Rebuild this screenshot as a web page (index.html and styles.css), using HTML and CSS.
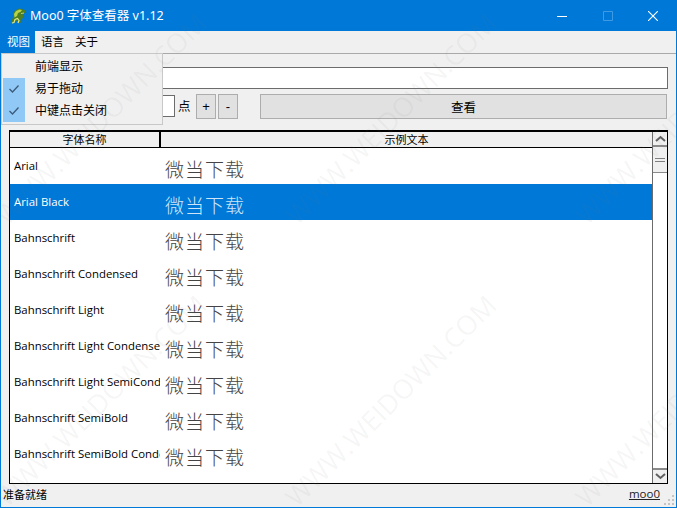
FILE: index.html
```html
<!DOCTYPE html>
<html lang="zh">
<head>
<meta charset="utf-8">
<title>Moo0 字体查看器</title>
<link rel="stylesheet" href="styles.css">
</head>
<body>
<div class="window">
  <header class="titlebar">
    <svg class="logo" width="18" height="18" viewBox="0 0 18 18">
      <path d="M2 16.500l1.500-5 1-2.500-.5-2 2-3.500 4-2 3 .5 3.500 1.500-.5 2.500-3 .5 1.500 2-1 3-2 1.500.5 2.500-3.500.5-.5-2-2.500.5-.5 1.500z" fill="#4f7f22"/>
      <path d="M5 7l2-3 3.500-1.500 2.500.5-1.500 2-2.500 1L8 9 5.500 10.500z" fill="#b5d24a"/>
      <path d="M3 16l2-.5 1-3 2.500-1 1.500 2-1 2.500" fill="none" stroke="#e2ea8a" stroke-width="1.200"/>
      <path d="M12 6.500l3-.5" stroke="#c3d75a" stroke-width="1"/>
    </svg>
    <span class="title">Moo0 字体查看器 v1.12</span>
    <div class="winbtns">
      <svg viewBox="0 0 10 10"><path d="M0 5.500h10" stroke="#fff"/></svg>
      <svg viewBox="0 0 10 10"><path d="M.5.5h9v9h-9z" stroke="#3d9be6" fill="none"/></svg>
      <svg viewBox="0 0 10 10"><path d="M0 0l10 10M10 0L0 10" stroke="#fff" stroke-width="1.100"/></svg>
    </div>
  </header>
  <nav class="menubar">
    <span class="menu active">视图</span>
    <span class="menu">语言</span>
    <span class="menu">关于</span>
  </nav>
  <main class="content">
    <div class="textrow"><div class="textinput"></div></div>
    <div class="controls">
      <div class="sizeinput"></div>
      <span class="unit">点</span>
      <button class="small plus">+</button>
      <button class="small">-</button>
      <button class="view">查看</button>
    </div>
    <div class="table">
      <div class="listpane">
        <div class="thead"><div class="th name">字体名称</div><div class="th sample">示例文本</div></div>
        <div class="row"><div class="fname">Arial</div><div class="demo">微当下载</div></div>
        <div class="row selected"><div class="fname">Arial Black</div><div class="demo">微当下载</div></div>
        <div class="row"><div class="fname">Bahnschrift</div><div class="demo">微当下载</div></div>
        <div class="row"><div class="fname">Bahnschrift Condensed</div><div class="demo">微当下载</div></div>
        <div class="row"><div class="fname">Bahnschrift Light</div><div class="demo">微当下载</div></div>
        <div class="row"><div class="fname">Bahnschrift Light Condensed</div><div class="demo">微当下载</div></div>
        <div class="row"><div class="fname">Bahnschrift Light SemiCondensed</div><div class="demo">微当下载</div></div>
        <div class="row"><div class="fname">Bahnschrift SemiBold</div><div class="demo">微当下载</div></div>
        <div class="row"><div class="fname">Bahnschrift SemiBold Condensed</div><div class="demo">微当下载</div></div>
      </div>
      <div class="scrollbar">
        <div class="sb-btn"><svg viewBox="0 0 11 7"><path d="M1 6l4.500-4 4.500 4" stroke="#606060" stroke-width="2" fill="none"/></svg></div>
        <div class="sb-thumb"><i></i><i></i></div>
        <div class="sb-track"></div>
        <div class="sb-btn down"><svg viewBox="0 0 11 7"><path d="M1 1l4.500 4 4.500-4" stroke="#606060" stroke-width="2" fill="none"/></svg></div>
      </div>
    </div>
  </main>
  <footer class="statusbar">
    <span class="status">准备就绪</span>
    <a class="link">moo0</a>
    <svg class="grip" viewBox="0 0 11 11"><path d="M8 0h2v2H8zM4 4h2v2H4zM8 4h2v2H8zM0 8h2v2H0zM4 8h2v2H4zM8 8h2v2H8z" fill="#c4c4c4"/></svg>
  </footer>
  <div class="dropdown">
    <div class="item"><span class="check"></span><span class="label">前端显示</span></div>
    <div class="item"><span class="check on"><svg viewBox="0 0 12 10"><path d="M1.500 5l3 3 6-6.500" stroke="#3c5a78" stroke-width="1.300" fill="none"/></svg></span><span class="label">易于拖动</span></div>
    <div class="item"><span class="check on"><svg viewBox="0 0 12 10"><path d="M1.500 5l3 3 6-6.500" stroke="#3c5a78" stroke-width="1.300" fill="none"/></svg></span><span class="label">中键点击关闭</span></div>
  </div>
  <div class="wm wm1">WWW.WEIDOWN.COM</div>
  <div class="wm wm2">WWW.WEIDOWN.COM</div>
  <div class="wm wm3">WWW.WEIDOWN.COM</div>
  <div class="wm wm4">WWW.WEIDOWN.COM</div>
  <div class="wm wm5">WWW.WEIDOWN.COM</div>
  <div class="wm wm6">WWW.WEIDOWN.COM</div>
</div>
</body>
</html>
```

FILE: styles.css
```css
* { box-sizing: border-box; }
html, body { margin: 0; padding: 0; }
body { width: 677px; height: 508px; overflow: hidden; font-family: "Noto Sans CJK SC", "Liberation Sans", sans-serif; font-size: 12px; color: #000; }
.window { position: relative; width: 677px; height: 508px; background: #f0f0f0; border: 1px solid #0078d7; border-top: 0; display: flex; flex-direction: column; overflow: hidden; }
.titlebar { height: 31px; flex: none; background: #0078d7; color: #fff; display: flex; align-items: center; padding-left: 8px; }
.logo { width: 18px; height: 18px; margin-right: 3px; flex: none; }
.title { font-family: "Noto Sans", "Noto Sans CJK SC", sans-serif; font-size: 12.5px; line-height: 28px; }
.winbtns { margin-left: auto; display: flex; gap: 35.5px; padding-right: 18px; }
.winbtns svg { width: 10px; height: 10px; }
.menubar { height: 23px; flex: none; background: #f0f0f0; display: flex; border-bottom: 1px solid #a9a9a9; }
.menu { padding: 0 6px; line-height: 21px; font-size: 11.5px; width: 34px; white-space: nowrap; }
.menu.active { background: #0078d7; color: #fff; }
.content { flex: none; display: flex; flex-direction: column; padding: 13px 8px 0 8px; }
.textrow { height: 22px; }
.textinput { height: 22px; background: #fff; border: 1px solid #6c6c6c; }
.controls { height: 25px; margin-top: 5px; margin-right: 1px; display: flex; align-items: stretch; padding-left: 130px; }
.sizeinput { width: 36px; height: 22px; margin-top: 1px; background: #fff; border: 1px solid #6c6c6c; }
.unit { width: 18px; margin-left: 3px; line-height: 24px; font-size: 12.5px; }
.small { width: 20px; height: 25px; padding: 0; background: #e1e1e1; border: 1px solid #adadad; font-family: "Liberation Sans", sans-serif; font-size: 13px; color: #000; }
.plus { margin-right: 2px; }
.view { flex: 1; margin-left: 22px; padding: 0; background: #e1e1e1; border: 1px solid #adadad; font-family: "Noto Sans CJK SC", sans-serif; font-size: 12.5px; color: #000; }
.table { margin-top: 11px; height: 354px; background: #fff; border: 1px solid #000; border-top-width: 2px; display: flex; }
.listpane { flex: 1; min-width: 0; overflow: hidden; }
.thead { display: flex; height: 16px; background: #f0f0f0; border-bottom: 1px solid #000; }
.th { text-align: center; line-height: 15px; font-size: 11px; }
.th.name { width: 151px; border-right: 2px solid #000; }
.th.sample { flex: 1; }
.row { height: 36px; display: flex; color: #000; }
.selected { background: #0078d7; color: #fff; }
.fname { width: 150px; flex: none; overflow: hidden; white-space: nowrap; padding: 9px 0 0 4px; font-family: "Open Sans", "Noto Sans", sans-serif; font-size: 11.4px; line-height: 18px; }
.demo { margin-left: 5px; padding-top: 8px; font-family: "Noto Sans CJK SC", sans-serif; font-size: 19px; line-height: 26px; color: #444; letter-spacing: 1px; font-weight: 300; }
.selected .demo { color: #cfe6f8; }
.scrollbar { width: 15px; flex: none; display: flex; flex-direction: column; border-left: 1px solid #6c6c6c; background: #fff; }
.sb-btn { height: 15px; flex: none; background: #f0f0f0; border-bottom: 2px solid #8a8a8a; display: flex; align-items: center; justify-content: center; }
.sb-btn svg { width: 11px; height: 7px; }
.sb-btn.down { border-bottom: 0; border-top: 2px solid #8a8a8a; }
.sb-thumb { height: 26px; flex: none; background: #f0f0f0; border-bottom: 1px solid #8a8a8a; display: flex; flex-direction: column; justify-content: center; gap: 2px; padding: 0 2px; }
.sb-thumb i { display: block; height: 1px; background: #808080; }
.sb-track { flex: 1; }
.statusbar { position: relative; flex: 1; display: flex; justify-content: space-between; padding: 0 16px 0 2px; line-height: 20px; }
.status { font-size: 11px; }
.link { color: #222; text-decoration: underline; font-family: "Open Sans", "Noto Sans", sans-serif; font-size: 11.5px; }
.grip { position: absolute; right: 1px; bottom: 1px; width: 11px; height: 11px; }
.dropdown { position: absolute; left: 0; top: 53px; width: 162px; height: 72px; padding: 2px 0; background: #f0f0f0; border: 1px solid #c8c8c8; }
.item { height: 22px; display: flex; align-items: center; font-size: 12px; }
.label { margin-bottom: 4px; }
.check { width: 22px; height: 22px; margin: 0 10px 0 1px; display: flex; align-items: center; justify-content: center; }
.check svg { width: 12px; height: 10px; }
.check.on { background: #90c8f6; }
.wm { position: absolute; font-family: "Open Sans", "Noto Sans", sans-serif; font-size: 27px; color: rgba(120,120,120,.07); transform: rotate(-45deg); white-space: nowrap; pointer-events: none; }
.wm1 { left: -43px; top: 100px; }
.wm2 { left: 247px; top: 100px; }
.wm3 { left: 247px; top: 382px; }
.wm4 { left: -43px; top: 382px; }
.wm5 { left: 537px; top: 100px; }
.wm6 { left: 537px; top: 382px; }
```
